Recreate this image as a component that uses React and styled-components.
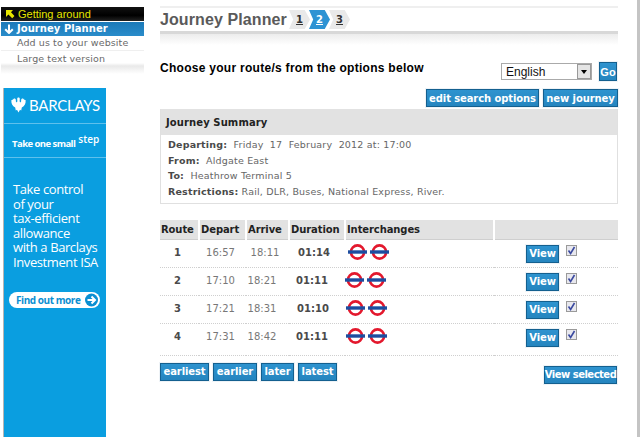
import React from "react";
import styled, { createGlobalStyle } from "styled-components";

const Global = createGlobalStyle`
  html, body { margin: 0; padding: 0; background: #fff; }
  body { font-family: "DejaVu Sans", Verdana, sans-serif; font-size: 10px; color: #555; }
  * { box-sizing: border-box; }
`;
const Page = styled.div`
  width: 640px; height: 437px; overflow: hidden; display: flex;
  border-right: 3px solid #c4c4c4; background: #fff;
`;
const Side = styled.aside`
  width: 160px; flex: none; padding-top: 7px; display: flex; flex-direction: column;
`;
const Nav = styled.nav`
  width: 143px; margin-left: 1px; height: 67px;
  background: linear-gradient(#fff 0, #fff 56px, #e9e9e9 59px, #fff 67px);
`;
const NavBlack = styled.div`
  height: 14px; background: linear-gradient(#111, #000 60%, #222); color: #e6e600;
  display: flex; align-items: center; gap: 3px; padding-left: 4px;
  font: 11px/14px "Liberation Sans", Arial, sans-serif;
`;
const NavBlue = styled.div`
  height: 14px; margin-top: 1px; padding: 0 0 1px 3px; background: linear-gradient(#1b79b8, #2a8cca); color: #fff;
  display: flex; align-items: center; gap: 3px;
  font-weight: 700; font-size: 10px; letter-spacing: .05px;
`;
const NavLink = styled.div`
  height: ${p => p.$h}px; padding: 0 0 1px 16px; display: flex; align-items: center;
  color: #6a6a6a; font-size: 9.5px; letter-spacing: .1px; border-bottom: 1px solid #efefef;
  &:last-child { border-bottom: 0; }
`;
const Ad = styled.div`
  margin: 14px 0 0 3px; width: 103px; flex: 1; background: #0a9ee0; border-left: 1px solid #b5b5b5;
  color: #fff; font-family: "Open Sans", sans-serif; display: flex; flex-direction: column;
`;
const Brand = styled.div`
  height: 36px; padding: 0 0 2px 7px; display: flex; align-items: center; gap: 3px;
  border-bottom: 1px solid #5fc0ec; font: 15px Lato, sans-serif; letter-spacing: -.25px;
`;
const Slogan = styled.div`
  height: 34px; border-bottom: 1px solid #5fc0ec; padding: 12px 0 0 8px; white-space: nowrap;
  font-weight: 700; font-size: 9.5px; line-height: 16px; letter-spacing: -.55px;
  & sup { font-size: 10px; font-weight: 600; line-height: 0; letter-spacing: 0; vertical-align: 4px; margin-left: 3px; }
`;
const Pitch = styled.div`
  padding: 24px 0 0 9px; font-size: 13px; line-height: 14.5px; letter-spacing: -.4px; white-space: nowrap;
`;
const Pill = styled.div`
  margin: 23px 0 0 5px; width: 91px; height: 16px; border-radius: 8px; background: #fff; color: #0a8fd2;
  display: flex; align-items: center; justify-content: space-between; padding: 0 1px 0 7px; white-space: nowrap;
  font-weight: 700; font-size: 10px; letter-spacing: -.45px;
`;
const Main = styled.main`
  width: 458px; flex: none; padding-top: 6px; display: flex; flex-direction: column;
`;
const TitleBar = styled.div`
  height: 28px; border-top: 2px solid #efefef; border-bottom: 3px solid #d8d8d8;
  display: flex; align-items: center; gap: 6px; 
`;
const Title = styled.h1`
  margin: 0; font: 700 16px "Liberation Sans", Arial, sans-serif; color: #5a5a5a; letter-spacing: .1px; width: 123px; white-space: nowrap;
`;
const Steps = styled.div`display: flex; gap: 0;`;
const Step = styled.span`
  width: 21px; height: 19px; margin-right: -1px; display: flex; align-items: center; justify-content: center;
  clip-path: polygon(0 0, 75% 0, 100% 50%, 75% 100%, 0 100%, 20% 50%);
  background: ${p => p.$on ? "#2e93d3" : "#e9e9e9"}; color: ${p => p.$on ? "#fff" : "#333"};
  font-weight: 700; font-size: 10px; text-decoration: underline;
`;
const Fade = styled.div`height: 11px; background: linear-gradient(#ececec, #fff);`;
const ChooseRow = styled.div`
  height: 33px; margin-top: 3px; display: flex; align-items: flex-end;
`;
const Choose = styled.h2`
  margin: 0 0 6px; width: 341px; font: 700 12px "Liberation Sans", Arial, sans-serif; letter-spacing: .28px; color: #000; white-space: nowrap;
`;
const Select = styled.div`
  width: 91px; height: 17px; margin-bottom: 1px; border: 1px solid #aaa; background: #fff; color: #111; display: flex;
  align-items: center; justify-content: space-between; padding-left: 4px;
  font: 12px "Liberation Sans", Arial, sans-serif;
`;
const Arrow = styled.span`
  width: 14px; height: 15px; background: #e4e4e4; border: 1px solid #999; display: flex; align-items: center; justify-content: center;
  &::after { content: ""; border: 3px solid transparent; border-top: 4px solid #000; border-bottom: 0; }
`;
const Btn = styled.button`
  appearance: none; margin: 0; padding: 0; height: ${p => p.$h || 18}px; width: ${p => p.$w}px; flex: none;
  background: linear-gradient(#2e93cf, #2585bf); border: 1px solid #14608f; box-shadow: 0 0 0 1px #eef3f7;
  color: #fff; font-family: "DejaVu Sans", Verdana, sans-serif; font-weight: 700; font-size: 10px; letter-spacing: ${p => p.$ls ?? -0.1}px; white-space: nowrap;
  display: flex; align-items: center; justify-content: center;
`;
const GoBtn = styled(Btn)`margin-left: 7px; margin-right: 1px; font-family: "Liberation Sans", Arial, sans-serif; font-size: 11px;`;
const Actions = styled.div`margin-top: 8px; display: flex; justify-content: flex-end; gap: 4px;`;
const Summary = styled.section`
  margin-top: 2px; height: 95px; border: 1px solid #e0e0e0; border-top: 0; display: flex; flex-direction: column;
`;
const SumHead = styled.h3`
  margin: 0; height: 26px; background: #e2e2e2; color: #222; font-size: 10px; font-weight: 700; letter-spacing: .1px;
  display: flex; align-items: center; padding-left: 5px;
`;
const SumBody = styled.div`padding: 2px 0 0 7px;`;
const SumLine = styled.div`
  height: 15.5px; line-height: 15.5px; font-size: 9.5px; letter-spacing: .18px; color: #666; white-space: pre;
  & b { color: #4a4a4a; }
`;
const Table = styled.table`
  margin-top: 16px; width: 458px; border-collapse: collapse; table-layout: fixed;
`;
const Th = styled.th`
  height: 19px; padding: 0 0 0 1px; text-align: left; background: #e2e2e2; border-right: 2px solid #fff; border-bottom: 1px solid #cfcfcf;
  color: #222; font-size: 10px; letter-spacing: -.1px; white-space: nowrap;
  &:last-child { border-right: 0; }
`;
const Td = styled.td`
  height: 28px; padding: 0 ${p => p.$pr || 0}px 2px 0; text-align: center; border-bottom: 1px dotted #cfcfcf;
  font-size: 10px; letter-spacing: 0; color: ${p => p.$b ? "#4a4a4a" : "#777"}; font-weight: ${p => p.$b ? 700 : 400};
  white-space: nowrap;
  tr:last-child > & { height: 32px; padding-bottom: 6px; }
`;
const TdLeft = styled(Td)`text-align: left; padding-left: ${p => p.$pl || 0}px;`;
const Roundels = styled.div`display: flex; gap: 3px; align-items: center;`;
const RowEnd = styled.div`display: flex; align-items: center; gap: 7px; padding-left: 32px; height: 25px;`;
const ViewBtn = styled(Btn)`margin-top: 3px;`;
const Check = styled.span`
  width: 11px; height: 11px; margin-bottom: 3px; border: 1px solid #9a9a9a; background: #e8e8ee; display: flex; align-items: center; justify-content: center;
`;
const Foot = styled.div`margin-top: 7px; display: flex; align-items: flex-start; gap: 4px;`;
const Push = styled.div`flex: 1;`;
const SelectedBtn = styled(Btn)`margin: 3px 1px 0 0;`;

const Roundel = () => (
  <svg width="19" height="16" viewBox="0 0 19 16">
    <circle cx="9.5" cy="8" r="6.6" fill="#fff" stroke="#e3182d" strokeWidth="2.6" />
    <rect x="0" y="6.3" width="19" height="3.4" fill="#1c4da0" />
  </svg>
);
const Tick = () => (
  <svg width="9" height="9" viewBox="0 0 9 9"><path d="M1.5 4.5 L3.6 7.5 L7.5 1" fill="none" stroke="#3b4aa0" strokeWidth="1.6" /></svg>
);
const Eagle = () => (
  <svg width="15" height="16" viewBox="0 0 15 16">
    <path fill="#fff" d="M7.5 .4 C8.4 .4 8.9 1 8.8 2 L8.6 4.4 L10 5.4 L10.2 2.6 L11.4 1 L12 2.4 L13 1.6 L13.4 3 L14.6 3 C15 6.4 13.6 9 10.8 10.4 L10.2 13.4 L9 12.8 L7.5 15.6 L6 12.8 L4.8 13.4 L4.2 10.4 C1.4 9 0 6.4 .4 3 L1.6 3 L2 1.6 L3 2.4 L3.6 1 L4.8 2.6 L5 5.4 L6.4 4.4 L6.2 2 C6.1 1 6.6 .4 7.5 .4 Z" />
  </svg>
);
const rows = [
  { n: "1", d: "16:57", a: "18:11", t: "01:14", pa: 5, pt: 6, pr: 3 },
  { n: "2", d: "17:10", a: "18:21", t: "01:11", pa: 11, pt: 10, pr: 0 },
  { n: "3", d: "17:21", a: "18:31", t: "01:10", pa: 11, pt: 8, pr: 1 },
  { n: "4", d: "17:31", a: "18:42", t: "01:11", pa: 11, pt: 10, pr: 1 },
];

export default function App() {
  return (
    <Page>
      <Global />
      <Side>
        <Nav>
          <NavBlack>
            <svg width="10" height="10" viewBox="0 0 10 10"><path d="M1 1 H8 L6 3.2 L9.5 7 L7.2 9.2 L3.4 5.6 L1 8 Z" fill="#e6e600" /></svg>
            Getting around
          </NavBlack>
          <NavBlue>
            <svg width="10" height="10" viewBox="0 0 10 10"><path d="M5 .5 V9 M1.2 5.2 L5 9 L8.8 5.2" fill="none" stroke="#fff" strokeWidth="2" /></svg>
            Journey Planner
          </NavBlue>
          <NavLink $h={15}>Add us to your website</NavLink>
          <NavLink $h={16}>Large text version</NavLink>
        </Nav>
        <Ad>
          <Brand><Eagle />BARCLAYS</Brand>
          <Slogan>Take one small<sup>step</sup></Slogan>
          <Pitch>Take control<br />of your<br />tax-efficient<br />allowance<br />with a Barclays<br />Investment ISA</Pitch>
          <Pill>Find out more
            <svg width="15" height="14" viewBox="0 0 15 14"><circle cx="7.5" cy="7" r="6.5" fill="#0a8fd2" /><path d="M3.5 7 H10.5 M7.5 3.5 L11 7 L7.5 10.5" fill="none" stroke="#fff" strokeWidth="2" /></svg>
          </Pill>
        </Ad>
      </Side>
      <Main>
        <TitleBar>
          <Title>Journey Planner</Title>
          <Steps>
            <Step>1</Step><Step $on>2</Step><Step>3</Step>
          </Steps>
        </TitleBar>
        <Fade />
        <ChooseRow>
          <Choose>Choose your route/s from the options below</Choose>
          <Select>English<Arrow /></Select>
          <GoBtn $w={18} $h={19} $ls={0}>Go</GoBtn>
        </ChooseRow>
        <Actions>
          <Btn $w={113}>edit search options</Btn>
          <Btn $w={75}>new journey</Btn>
        </Actions>
        <Summary>
          <SumHead>Journey Summary</SumHead>
          <SumBody>
            <SumLine><b>Departing:</b>  Friday  17  February  2012 at: 17:00</SumLine>
            <SumLine><b>From:</b>  Aldgate East</SumLine>
            <SumLine><b>To:</b>  Heathrow Terminal 5</SumLine>
            <SumLine><b>Restrictions:</b> Rail, DLR, Buses, National Express, River.</SumLine>
          </SumBody>
        </Summary>
        <Table>
          <colgroup>
            <col style={{ width: 39 }} /><col style={{ width: 47 }} /><col style={{ width: 43 }} />
            <col style={{ width: 56 }} /><col style={{ width: 149 }} /><col style={{ width: 124 }} />
          </colgroup>
          <thead>
            <tr><Th>Route</Th><Th>Depart</Th><Th>Arrive</Th><Th>Duration</Th><Th>Interchanges</Th><Th /></tr>
          </thead>
          <tbody>
            {rows.map(r => (
              <tr key={r.n}>
                <Td $b $pr={4}>{r.n}</Td>
                <Td $pr={4}>{r.d}</Td>
                <Td $pr={r.pa}>{r.a}</Td>
                <Td $b $pr={r.pt}>{r.t}</Td>
                <TdLeft $pl={r.pr}><Roundels><Roundel /><Roundel /></Roundels></TdLeft>
                <TdLeft><RowEnd><ViewBtn $w={33}>View</ViewBtn><Check><Tick /></Check></RowEnd></TdLeft>
              </tr>
            ))}
          </tbody>
        </Table>
        <Foot>
          <Btn $w={49}>earliest</Btn>
          <Btn $w={44}>earlier</Btn>
          <Btn $w={33}>later</Btn>
          <Btn $w={39}>latest</Btn>
          <Push />
          <SelectedBtn $w={73} $ls={-0.5}>View selected</SelectedBtn>
        </Foot>
      </Main>
    </Page>
  );
}
